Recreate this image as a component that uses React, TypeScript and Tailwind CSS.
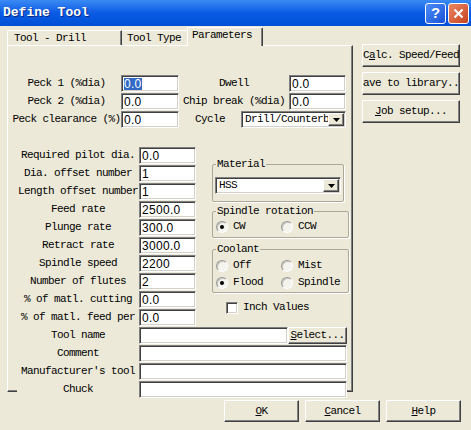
import React from "react";

const mono = "font-['Liberation_Mono','DejaVu_Sans_Mono',monospace] text-[11px] tracking-[-0.6px]";
const sunken =
  "bg-white border border-t-[#808080] border-l-[#808080] border-b-white border-r-white shadow-[inset_1px_1px_0_#404040,inset_-1px_-1px_0_#d4d0c8]";
const raised =
  "bg-[#ece9d8] border border-t-white border-l-white border-b-[#404040] border-r-[#404040] shadow-[inset_-1px_-1px_0_#808080]";

function Field({ value, w, selected }: { value?: string; w: string; selected?: boolean }) {
  return (
    <div className={`h-[17px] ${w} ${sunken} pl-[2px] flex items-center font-['Liberation_Sans',sans-serif] text-[12px] leading-none tracking-[0.3px] overflow-hidden`}>
      {value && (
        <span className={selected ? "bg-[#316ac5] text-white h-[12px] flex items-center" : ""}>{value}</span>
      )}
    </div>
  );
}

function Arrow() {
  return (
    <div className={`w-[16px] h-full ${raised} flex items-center justify-center shrink-0`}>
      <svg width="7" height="4" viewBox="0 0 7 4">
        <path d="M0 0h7L3.5 4z" fill="#000" />
      </svg>
    </div>
  );
}

function Combo({ value, w }: { value: string; w: string }) {
  return (
    <div className={`h-[17px] ${w} ${sunken} flex items-stretch p-[1px]`}>
      <div className="flex-1 pl-[2px] flex items-center overflow-hidden whitespace-nowrap">{value}</div>
      <Arrow />
    </div>
  );
}

function Button({ children, className }: { children: React.ReactNode; className: string }) {
  return (
    <div className={`${raised} ${className} flex items-center justify-center overflow-hidden whitespace-nowrap`}>
      {children}
    </div>
  );
}

function Radio({ label, checked }: { label: string; checked?: boolean }) {
  return (
    <div className="flex items-center gap-[5px] w-[65px]">
      <span className="w-[12px] h-[12px] rounded-full bg-[#f4f3ee] border border-t-[#9a9a9a] border-l-[#9a9a9a] border-b-white border-r-white shadow-[inset_1px_1px_0_#c8c6bc] flex items-center justify-center">
        {checked && <span className="w-[4px] h-[4px] rounded-full bg-black" />}
      </span>
      <span>{label}</span>
    </div>
  );
}

function Group({ title, children, className }: { title: string; children: React.ReactNode; className: string }) {
  return (
    <fieldset className={`border border-[#aca899] shadow-[1px_1px_0_#fff] rounded-[2px] px-[2px] ${className}`}>
      <legend className="ml-[1px] px-[1px] leading-[12px]">{title}</legend>
      {children}
    </fieldset>
  );
}

// static labels are opaque, like the dialog's own static controls
function Row({ label, children }: { label: string; children: React.ReactNode }) {
  return (
    <div className="flex h-[17px]">
      <div className="w-[122px] bg-[#ece9d8] flex items-center justify-center whitespace-nowrap">{label}</div>
      {children}
    </div>
  );
}

const leftRows: [string, string][] = [
  ["Required pilot dia.", "0.0"],
  ["Dia. offset number", "1"],
  ["Length offset number", "1"],
  ["Feed rate", "2500.0"],
  ["Plunge rate", "300.0"],
  ["Retract rate", "3000.0"],
  ["Spindle speed", "2200"],
  ["Number of flutes", "2"],
  ["% of matl. cutting", "0.0"],
  ["% of matl. feed per", "0.0"],
];

export default function App() {
  return (
    <div className={`w-[471px] h-[430px] bg-[#ece9d8] text-black overflow-hidden flex flex-col ${mono}`}>
      {/* title bar */}
      <div className="h-[26px] shrink-0 bg-gradient-to-b from-[#3a8af5] via-[#0a5ae4] to-[#0050d6] flex items-center pl-[3px] pr-[2px]">
        <span className="flex-1 text-white font-bold text-[13px] tracking-[0px] [text-shadow:1px_1px_0_#0a2a80]">Define Tool</span>
        <div className="flex gap-[2px]">
          <div className="w-[21px] h-[21px] rounded-[3px] border border-white bg-gradient-to-br from-[#4d8cf7] to-[#1a52d8] flex items-center justify-center text-white font-['Liberation_Sans',sans-serif] font-bold text-[15px] tracking-normal">
            ?
          </div>
          <div className="w-[21px] h-[21px] rounded-[3px] border border-white bg-gradient-to-br from-[#e98762] to-[#c8401c] flex items-center justify-center">
            <svg width="11" height="11" viewBox="0 0 11 11">
              <path d="M1.5 1.5l8 8M9.5 1.5l-8 8" stroke="#fff" strokeWidth="2" />
            </svg>
          </div>
        </div>
      </div>

      <div className="flex">
        <div className="ml-[7px] w-[346px]">
          {/* tabs */}
          <div className="h-[19px] flex items-end">
            <div className="h-[15px] w-[115px] border-t border-l border-r border-t-white border-l-white border-r-[#404040] shadow-[inset_-1px_0_0_#808080] rounded-tl-[2px] pl-[6px] flex items-center">
              Tool - Drill
            </div>
            <div className="h-[15px] w-[67px] border-t border-t-white pl-[5px] flex items-center">Tool Type</div>
            <div className="relative z-10 -ml-[2px] -mb-[1px] h-[19px] w-[76px] bg-[#ece9d8] border-t border-l border-r border-t-white border-l-white border-r-[#404040] shadow-[inset_-1px_0_0_#808080] rounded-t-[2px] pl-[4px] pb-[4px] flex items-center">
              Parameters
            </div>
          </div>

          {/* page */}
          <div className="h-[347px] border border-t-white border-l-white border-r-[#404040] border-b-[#404040] shadow-[inset_-1px_-1px_0_#808080] pt-[29px]">
            <div className="flex flex-col gap-[1px]">
              <div className="flex h-[17px]">
                <div className="ml-[2px] w-[113px] flex items-center justify-center whitespace-nowrap">Peck 1 (%dia)</div>
                <div className="-ml-[2px]"><Field w="w-[58px]" value="0.0" selected /></div>
                <div className="w-[110px] flex items-center justify-center whitespace-nowrap">Dwell</div>
                <Field w="w-[57px]" value="0.0" />
              </div>
              <div className="flex h-[17px]">
                <div className="ml-[2px] w-[113px] flex items-center justify-center whitespace-nowrap">Peck 2 (%dia)</div>
                <div className="-ml-[2px]"><Field w="w-[58px]" value="0.0" /></div>
                <div className="w-[110px] flex items-center justify-center whitespace-nowrap">Chip break (%dia)</div>
                <Field w="w-[57px]" value="0.0" />
              </div>
              <div className="flex h-[17px]">
                <div className="ml-[2px] w-[113px] flex items-center justify-center whitespace-nowrap">Peck clearance (%)</div>
                <div className="-ml-[2px]"><Field w="w-[58px]" value="0.0" /></div>
                <div className="w-[62px] flex items-center justify-center whitespace-nowrap">Cycle</div>
                <Combo w="w-[105px]" value="Drill/Counterbore" />
              </div>
            </div>

            <div className="flex mt-[19px] ml-[9px]">
              <div className="flex flex-col gap-[1px]">
                {leftRows.map(([label, value]) => (
                  <Row key={label} label={label}>
                    <Field w="w-[57px]" value={value} />
                  </Row>
                ))}
              </div>
              <div className="ml-[16px] mt-[11px] w-[132px] flex flex-col">
                <Group title="Material" className="pb-[7px]">
                  <div className="mt-[7px]">
                    <Combo w="w-[126px]" value="HSS" />
                  </div>
                </Group>
                <Group title="Spindle rotation" className="mt-[3px] pb-[4px]">
                  <div className="mt-[3px] flex h-[13px] pl-[1px]">
                    <Radio label="CW" checked />
                    <Radio label="CCW" />
                  </div>
                </Group>
                <Group title="Coolant" className="mt-[5px] pb-[3px]">
                  <div className="mt-[4px] flex flex-col gap-[4px] pl-[1px]">
                    <div className="flex h-[13px]">
                      <Radio label="Off" />
                      <Radio label="Mist" />
                    </div>
                    <div className="flex h-[13px]">
                      <Radio label="Flood" checked />
                      <Radio label="Spindle" />
                    </div>
                  </div>
                </Group>
                <div className="mt-[8px] ml-[14px] flex items-center gap-[5px] h-[13px]">
                  <span className={`w-[12px] h-[12px] ${sunken}`} />
                  <span>Inch Values</span>
                </div>
              </div>
            </div>

            <div className="ml-[9px] mt-[1px] flex flex-col gap-[1px]">
              <Row label="Tool name">
                <Field w="w-[149px]" />
                <Button className="w-[59px] h-[17px]">
                  <span><u>S</u>elect...</span>
                </Button>
              </Row>
              <Row label="Comment">
                <Field w="w-[208px]" />
              </Row>
              <Row label="Manufacturer's tool">
                <Field w="w-[208px]" />
              </Row>
              <Row label="Chuck">
                <Field w="w-[208px]" />
              </Row>
            </div>
          </div>
        </div>

        {/* side buttons */}
        <div className="ml-[9px] mt-[18px] w-[98px] flex flex-col gap-[5px]">
          <Button className="h-[23px]">
            <span>C<u>a</u>lc. Speed/Feed</span>
          </Button>
          <Button className="h-[23px]">
            <span>Save to library...</span>
          </Button>
          <Button className="h-[23px]">
            <span><u>J</u>ob setup...</span>
          </Button>
        </div>
      </div>

      <div className="mt-[8px] ml-[224px] flex gap-[6px]">
        <Button className="w-[75px] h-[22px]">
          <span><u>O</u>K</span>
        </Button>
        <Button className="w-[75px] h-[22px]">
          <span><u>C</u>ancel</span>
        </Button>
        <Button className="w-[75px] h-[22px]">
          <span><u>H</u>elp</span>
        </Button>
      </div>
    </div>
  );
}
